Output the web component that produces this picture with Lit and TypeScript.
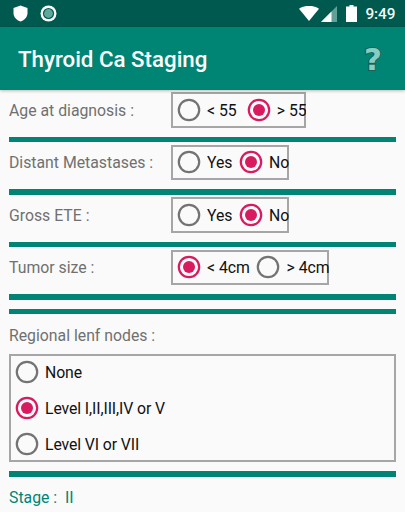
import { LitElement, html, css, svg } from "lit";
import { customElement } from "lit/decorators.js";

type Opt = { label: string; on?: boolean };

const radio = (o: Opt) => html`
  <span class="opt">
    <svg class="radio" viewBox="0 0 24 24" width="24" height="24">
      <circle cx="12" cy="12" r="10.2" fill="none" stroke=${o.on ? "#d81b60" : "#737373"} stroke-width="2.2"></circle>
      ${o.on ? svg`<circle cx="12" cy="12" r="6" fill="#d81b60"></circle>` : ""}
    </svg>
    <span class="optl">${o.label}</span>
  </span>`;

@customElement("app-root")
export class AppRoot extends LitElement {
  static styles = css`
    :host {
      display: block;
      width: 405px;
      height: 512px;
      overflow: hidden;
      background: #fafafa;
      font-family: Roboto, "Liberation Sans", sans-serif;
    }
    .status {
      height: 27px;
      background: #00594f;
      display: flex;
      align-items: center;
      padding: 0 9.5px 0 13px;
      color: #fff;
    }
    .status .left { display: flex; align-items: center; gap: 11.5px; flex: 1; }
    .status .right { display: flex; align-items: center; }
    .time { font-size: 15.3px; font-weight: 500; margin-left: 8.5px; color: #f2f8f7; }
    .sig { margin-left: 2px; }
    .bat { margin-left: 9px; }
    .bar {
      height: 63px;
      background: #008575;
      display: flex;
      align-items: center;
      justify-content: space-between;
      padding: 0 23px 0 18px;
      box-shadow: 0 1px 3px rgba(0, 0, 0, 0.25);
      position: relative;
    }
    .title { color: #fff; font-size: 22.3px; font-weight: 500; padding-top: 1px; }
    .help {
      font-family: "DejaVu Sans", sans-serif;
      font-weight: 700;
      font-size: 31px;
      color: #84cec4;
      -webkit-text-stroke: 2px #1f5f58;
      paint-order: stroke fill;
    }
    .content { padding: 2px 9px 0; }
    .row { display: flex; align-items: center; height: 35.5px; }
    .label { color: #707070; font-size: 15.8px; width: 162px; flex: none; padding-top: 1px; }
    .box {
      box-sizing: border-box;
      height: 35.5px;
      box-shadow: inset 0 0 0 2px #a6a6a6;
      display: flex;
      align-items: center;
      padding-left: 6px;
      overflow: hidden;
      white-space: nowrap;
    }
    .box.age { width: 135px; --gap: 10px; }
    .box.yn { width: 117.5px; --gap: 6.5px; }
    .box.tum { width: 158px; --gap: 6.5px; }
    .opt { display: flex; align-items: center; flex: none; color: #111; font-size: 15.8px; }
    .optl { margin-left: 6px; margin-right: var(--gap, 6px); padding-top: 1px; }
    .radio { flex: none; }
    .rule { height: 5.25px; background: #008575; margin: 9.25px 0 2.5px; }
    .rule.gap { margin-bottom: 9.25px; }
    .rule.flush { margin: 0; }
    .rule.last { margin-bottom: 0; }
    .sub { color: #707070; font-size: 15.8px; padding: 12px 0 9px; line-height: 19px; }
    .big {
      box-sizing: border-box;
      height: 108px;
      border: 2px solid #a6a6a6;
      display: flex;
      flex-direction: column;
      justify-content: center;
      padding-left: 4px;
    }
    .big .opt { height: 36px; }
    .big .optl { letter-spacing: -0.1px; }
    .stage { color: #008575; font-size: 15.8px; margin-top: 11px; }
  `;

  render() {
    return html`
      <div class="status">
        <div class="left">
          <svg width="15" height="17" viewBox="0 0 15 17">
            <path d="M7.5 0.5 L14.5 3 V8 C14.5 12 11.5 15.3 7.5 16.5 C3.5 15.3 0.5 12 0.5 8 V3 Z" fill="#fff"></path>
          </svg>
          <svg width="17" height="17" viewBox="0 0 17 17">
            <circle cx="8.5" cy="8.5" r="8" fill="#fff"></circle>
            <circle cx="8.5" cy="8.5" r="5.6" fill="#00594f"></circle>
            <circle cx="8.5" cy="8.5" r="4.4" fill="#5fa79d"></circle>
          </svg>
        </div>
        <div class="right">
          <svg width="20" height="15" viewBox="0 0 20 15">
            <path d="M0 2.8 C5.5 -1.2 14.5 -1.2 20 2.8 L10 15 Z" fill="#fff"></path>
          </svg>
          <svg class="sig" width="16" height="16" viewBox="0 0 16 16">
            <path d="M16 0 V16 H0 Z" fill="#62a097"></path>
            <path d="M10.5 5.5 V16 H0 Z" fill="#fff"></path>
          </svg>
          <svg class="bat" width="11" height="17" viewBox="0 0 11 17">
            <path d="M3.5 0 H7.5 V1.5 H11 V17 H0 V1.5 H3.5 Z" fill="#fff"></path>
          </svg>
          <span class="time">9:49</span>
        </div>
      </div>
      <div class="bar">
        <span class="title">Thyroid Ca Staging</span>
        <span class="help">?</span>
      </div>
      <div class="content">
        <div class="row"><span class="label">Age at diagnosis :</span>
          <div class="box age">${radio({ label: "< 55" })}${radio({ label: "> 55", on: true })}</div></div>
        <div class="rule"></div>
        <div class="row"><span class="label">Distant Metastases :</span>
          <div class="box yn">${radio({ label: "Yes" })}${radio({ label: "No", on: true })}</div></div>
        <div class="rule"></div>
        <div class="row"><span class="label">Gross ETE :</span>
          <div class="box yn">${radio({ label: "Yes" })}${radio({ label: "No", on: true })}</div></div>
        <div class="rule"></div>
        <div class="row"><span class="label">Tumor size :</span>
          <div class="box tum">${radio({ label: "< 4cm", on: true })}${radio({ label: "> 4cm" })}</div></div>
        <div class="rule gap"></div>
        <div class="rule flush"></div>
        <div class="sub">Regional lenf nodes :</div>
        <div class="big">
          ${radio({ label: "None" })}${radio({ label: "Level I,II,III,IV or V", on: true })}${radio({ label: "Level VI or VII" })}
        </div>
        <div class="rule last"></div>
        <div class="stage">Stage :&nbsp; II</div>
      </div>
    `;
  }
}
